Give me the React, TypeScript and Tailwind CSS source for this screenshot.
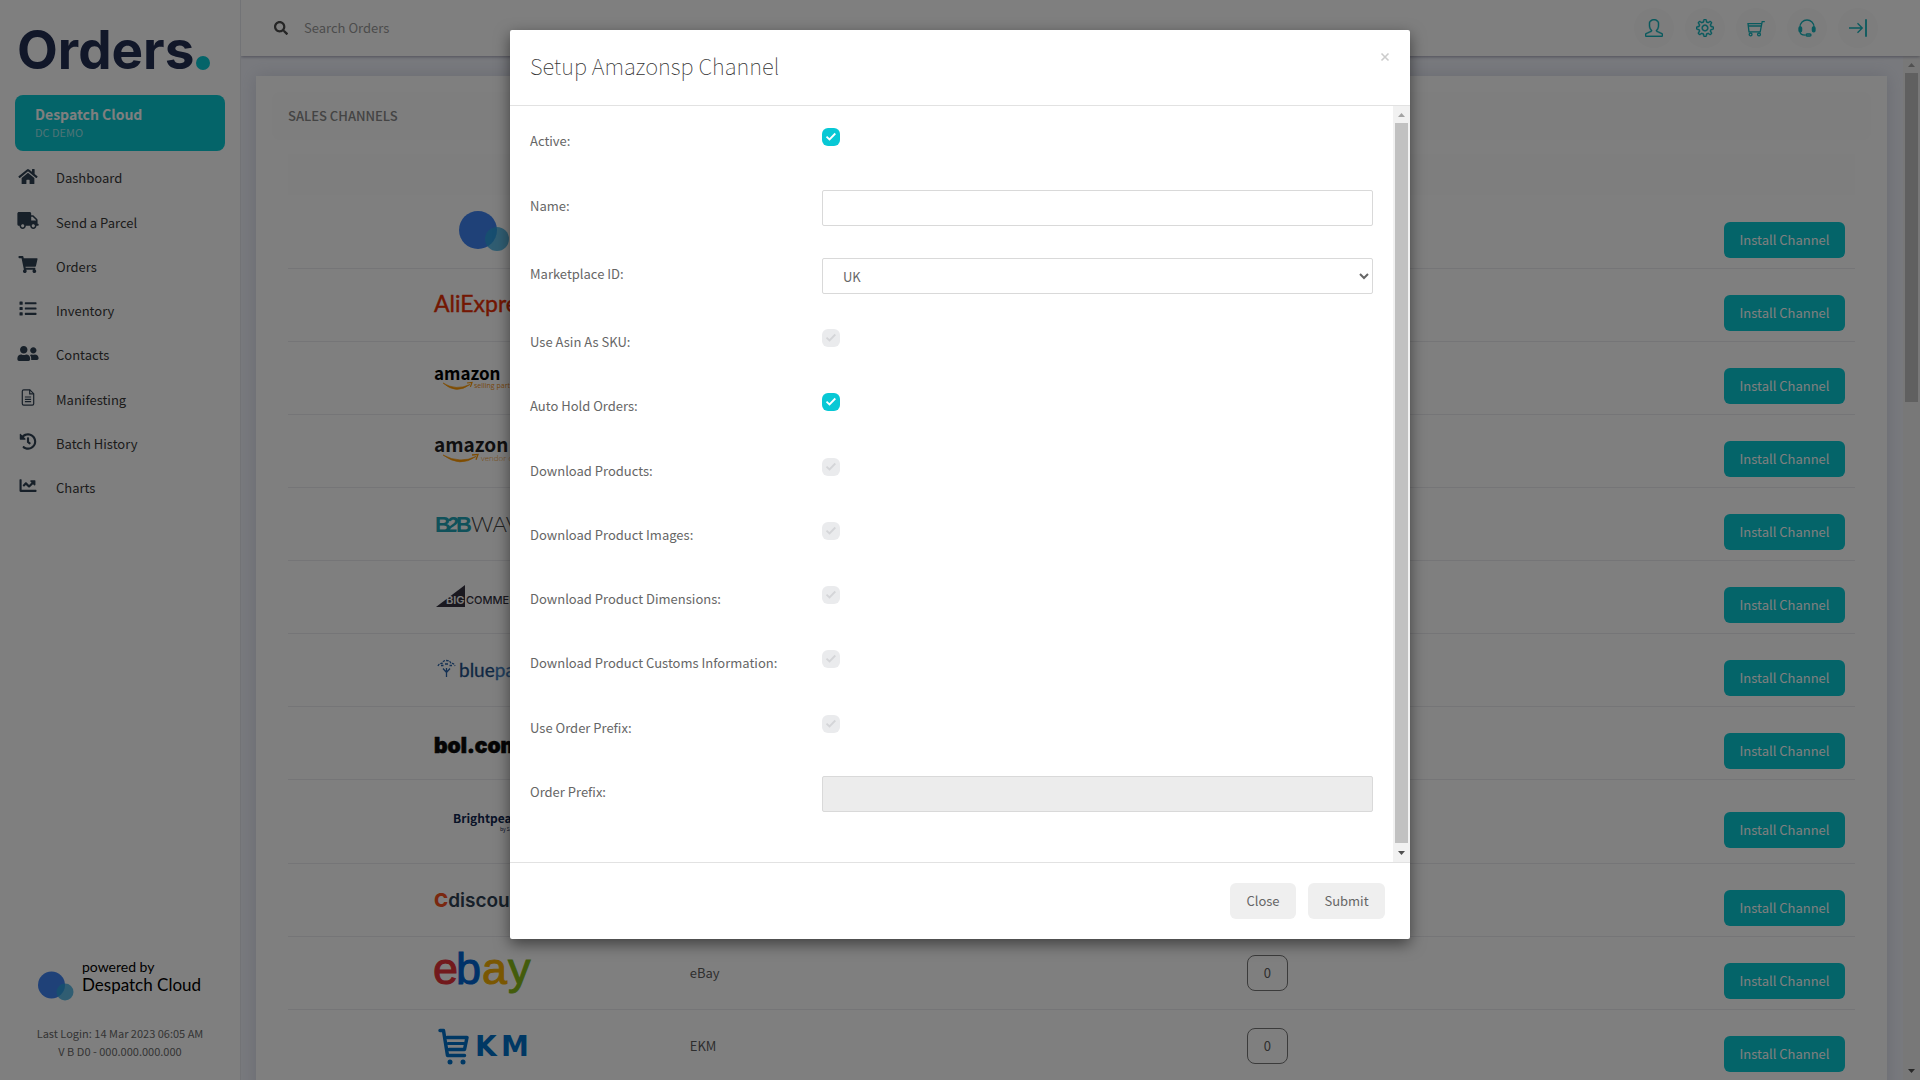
import { useState, type ReactNode } from "react";
import { SlUser, SlSettings } from "react-icons/sl";
import {
  FaChartLine,
  FaHistory,
  FaHome,
  FaList,
  FaSearch,
  FaShoppingCart,
  FaTruck,
  FaUserFriends,
} from "react-icons/fa";

function FileIcon({ className }: { className?: string }) {
  return (
    <svg viewBox="0 0 13 17" className={className} fill="none" stroke="currentColor" strokeWidth="1.2">
      <path d="M8.300.8H2.200A1.400 1.400 0 0 0 .8 2.200v12.600a1.400 1.400 0 0 0 1.400 1.400h8.600a1.400 1.400 0 0 0 1.400-1.400V4.700z" />
      <path d="M8.200.8v4h4M3.400 8h6.200M3.400 10.300h6.200M3.400 12.600h6.200" />
    </svg>
  );
}

const navItems = [
  { label: "Dashboard", Icon: FaHome },
  { label: "Send a Parcel", Icon: FaTruck },
  { label: "Orders", Icon: FaShoppingCart },
  { label: "Inventory", Icon: FaList },
  { label: "Contacts", Icon: FaUserFriends },
  { label: "Manifesting", Icon: FileIcon },
  { label: "Batch History", Icon: FaHistory },
  { label: "Charts", Icon: FaChartLine },
];

function CartIcon() {
  return (
    <svg viewBox="0 0 18 18" className="size-[18px]" fill="none" stroke="currentColor" strokeWidth="1.3">
      <path d="M17.8 2.6h-2.6l-2 10.2H2L1 4.6h13.6M1.2 7h12.8" />
      <circle cx="3.6" cy="15.4" r="1.4" />
      <circle cx="12" cy="15.4" r="1.4" />
    </svg>
  );
}

function HeadsetIcon() {
  return (
    <svg viewBox="0 0 18 18" className="size-[18px]" fill="none" stroke="currentColor" strokeWidth="1.3">
      <path d="M2 8a7 7 0 0 1 14 0" />
      <path d="M2 12.5c0 2.4 2.2 3.6 5.4 3.6" />
      <rect x="1" y="7.8" width="2.6" height="5" rx="1.2" fill="currentColor" />
      <rect x="14.4" y="7.8" width="2.6" height="5" rx="1.2" fill="currentColor" />
      <rect x="8" y="15" width="5" height="2" rx="1" />
    </svg>
  );
}

function LogoutIcon() {
  return (
    <svg viewBox="0 0 18 18" className="size-[18px]" fill="none" stroke="currentColor" strokeWidth="1.3">
      <path d="M0 9h13M8.5 4.2L13.3 9l-4.8 4.8" />
      <path d="M17 .2v17.6" strokeWidth="1.8" />
    </svg>
  );
}

const tools: { label: string; icon: ReactNode }[] = [
  { label: "Profile", icon: <SlUser strokeWidth={20} className="size-[18px]" /> },
  { label: "Settings", icon: <SlSettings strokeWidth={20} className="size-[18px]" /> },
  { label: "Basket", icon: <CartIcon /> },
  { label: "Support", icon: <HeadsetIcon /> },
  { label: "Log out", icon: <LogoutIcon /> },
];

function Logo({ label, children }: { label: string; children: ReactNode }) {
  return (
    <svg viewBox="0 0 100 60" className="mx-auto block h-[60px] w-[100px] overflow-visible" role="img" aria-label={label}>
      {children}
    </svg>
  );
}

const sans = "'Noto Sans CJK SC', sans-serif";

type Channel = { id: string; name?: string; installed?: number; tall?: boolean; logo: ReactNode };

const channels: Channel[] = [
  {
    id: "Despatch Cloud",
    logo: (
      <>
        <circle cx="44" cy="29" r="19" fill="#3f82f0" />
        <circle cx="63" cy="38" r="12" fill="#2ba4dc" fillOpacity="0.75" />
      </>
    ),
  },
  {
    id: "AliExpress",
    logo: (
      <text x="0" y="37" fontFamily="Lato, sans-serif" fontSize="23" fill="#e62e04" stroke="#e62e04" strokeWidth="0.4">
        AliExpress
      </text>
    ),
  },
  {
    id: "Amazon Selling Partner",
    logo: (
      <>
        <text x="0" y="32" fontFamily={sans} fontWeight="700" fontSize="17" fill="#000">
          amazon
        </text>
        <path d="M9 35Q22 43 36 36.500Q22 47 9 35Z" fill="#f90" stroke="#f90" strokeWidth="0.6" />
        <path d="M33 35l5-.6-1.600 4.500" fill="none" stroke="#f90" strokeWidth="1.200" />
        <text x="40" y="40" fontFamily="Open Sans, sans-serif" fontSize="7" fill="#f09020">
          selling partner
        </text>
      </>
    ),
  },
  {
    id: "Amazon Vendor Central",
    logo: (
      <>
        <text x="0" y="31" fontFamily={sans} fontWeight="700" fontSize="19" fill="#221f1f">
          amazon
        </text>
        <path d="M9 34Q26 43 42 35.500Q26 47 9 34Z" fill="#f90" stroke="#f90" strokeWidth="0.6" />
        <path d="M38 34l6-.6-2 5.400" fill="none" stroke="#f90" strokeWidth="1.300" />
        <text x="47" y="40" fontFamily="Open Sans, sans-serif" fontWeight="300" fontSize="8" fill="#f0951c">
          vendor central
        </text>
      </>
    ),
  },
  {
    id: "B2B Wave",
    logo: (
      <>
        <text x="1" y="38" fontFamily="Liberation Sans, sans-serif" fontWeight="700" fontSize="22" fill="#21a3b4">
          B<tspan x="12" fontStyle="italic">2</tspan>
          <tspan x="22">B</tspan>
        </text>
        <text x="37" y="38" fontFamily="Lato, sans-serif" fontWeight="300" fontSize="22" fill="#444">
          WAVE
        </text>
      </>
    ),
  },
  {
    id: "BigCommerce",
    logo: (
      <>
        <path d="M2 40h29V18z" fill="#34313f" />
        <text x="12" y="37" fontFamily="Inter, sans-serif" fontWeight="600" fontSize="11" fill="#fff">
          BIG
        </text>
        <text x="32" y="37" fontFamily="Inter, sans-serif" fontWeight="500" fontSize="11" fill="#34313f">
          COMMERCE
        </text>
      </>
    ),
  },
  {
    id: "Bluepark",
    logo: (
      <>
        <g fill="none" stroke="#2b63a8" strokeWidth="1.300">
          <path d="M4 26q1-3 4-2.500Q9 20.500 12.500 20.500T17 23.500q3-.5 4 2.500" strokeDasharray="2.500 1" />
          <path d="M12.500 28v9M9 28.500l3.500 4 3.500-4M7 25.500h2.500M15.500 25.500h2.500M11 24h3" />
        </g>
        <text x="25" y="37" fontFamily="Lato, sans-serif" fontSize="19" fill="#1f4f86" stroke="#1f4f86" strokeWidth="0.300">
          blue<tspan fill="#3f7cba" stroke="#3f7cba">park</tspan>
        </text>
      </>
    ),
  },
  {
    id: "Bol.com",
    logo: (
      <text x="0" y="40" fontFamily="Inter, sans-serif" fontWeight="900" fontSize="21" fill="#0a0a0a" stroke="#0a0a0a" strokeWidth="0.600">
        bol.com
      </text>
    ),
  },
  {
    id: "Brightpearl",
    tall: true,
    logo: (
      <>
        <text x="19" y="32" fontFamily={sans} fontWeight="700" fontSize="12" fill="#10264f">
          Brightpearl
        </text>
        <text x="66" y="40" fontFamily={sans} fontSize="5" fill="#10264f">
          by Sage
        </text>
      </>
    ),
  },
  {
    id: "Cdiscount",
    logo: (
      <text x="0" y="37" fontFamily="Inter, sans-serif" fontWeight="600" fontSize="19" fill="#2f4152">
        <tspan fill="#f4511e" fontWeight="800">
          C
        </tspan>
        discount
      </text>
    ),
  },
  {
    id: "eBay",
    name: "eBay",
    installed: 0,
    logo: (
      <g fontFamily="Liberation Sans, sans-serif" fontSize="45" strokeWidth="1">
        <text x="-1" y="41" fill="#e53238" stroke="#e53238">
          e
        </text>
        <text x="22" y="41" fill="#0064d2" stroke="#0064d2">
          b
        </text>
        <text x="48" y="41" fill="#f5af02" stroke="#f5af02">
          a
        </text>
        <text x="74" y="41" fill="#86b817" stroke="#86b817">
          y
        </text>
      </g>
    ),
  },
  {
    id: "EKM",
    name: "EKM",
    installed: 0,
    logo: (
      <>
        <g fill="none" stroke="#0070c9" strokeLinecap="round" strokeLinejoin="round">
          <path d="M6 14.500h3.500l4 25h17" strokeWidth="3.500" />
          <path d="M13 21.500h20l-2.500 12H15" strokeWidth="3.500" />
          <path d="M14 27.500h16" strokeWidth="3" />
        </g>
        <circle cx="16" cy="46" r="2.500" fill="#0070c9" />
        <circle cx="29" cy="46" r="2.500" fill="#0070c9" />
        <text x="41" y="40" fontFamily="DejaVu Sans, sans-serif" fontWeight="700" fontSize="28" fill="#0070c9">
          K<tspan x="67">M</tspan>
        </text>
      </>
    ),
  },
];

function Sidebar() {
  return (
    <aside className="relative z-20 flex w-[241px] shrink-0 flex-col border-r border-[#e4e6ec] bg-white px-[15px]">
      <div className="mt-[19px] flex h-[63px] items-center pl-[2px]">
        <span className="font-[Inter] text-[53px] leading-[63px] font-bold text-[#232f53]">Orders</span>
        <span className="mt-[24px] ml-[2px] size-[14px] rounded-full bg-[#08c8d2]" />
      </div>
      <div className="mt-[13px] h-14 rounded-lg bg-[#08c8d2] px-5 pt-[9px] text-white">
        <p className="text-[14px] leading-5 font-bold">Despatch Cloud</p>
        <p className="text-[11px] leading-4 text-white/60">DC DEMO</p>
      </div>
      <nav className="mt-[15px] flex h-[334px] flex-col justify-between">
        {navItems.map(({ label, Icon }) => (
          <a key={label} href="#" className="flex h-6 items-center gap-[17px] text-[13px] text-[#383838]">
            <Icon className="mb-1 ml-[2px] h-[17px] w-[22px] text-[#2f4052]" />
            {label}
          </a>
        ))}
      </nav>
      <div className="mt-auto pb-5">
        <div className="flex items-end gap-2 pl-[23px]">
          <svg viewBox="0 0 36 30" className="h-[30px] w-9">
            <circle cx="13.500" cy="14" r="13.500" fill="#3f82f0" />
            <circle cx="27" cy="21" r="8.500" fill="#2ba4dc" fillOpacity="0.75" />
          </svg>
          <div className="mb-[7px] font-[Lato] text-black">
            <p className="text-[14px] leading-[18px]">powered by</p>
            <p className="text-[17px] leading-[18px] whitespace-nowrap">Despatch Cloud</p>
          </div>
        </div>
        <div className="mt-[23px] text-center text-[11px] leading-[18px] text-[#6a6a6a]">
          <p>Last Login: 14 Mar 2023 06:05 AM</p>
          <p>V B D0 - 000.000.000.000</p>
        </div>
      </div>
    </aside>
  );
}

function TopBar() {
  return (
    <header className="relative z-10 flex h-14 shrink-0 items-center bg-white pr-[42px] pl-[33px] shadow-[0_1px_3px_rgba(60,60,90,0.45)]">
      <FaSearch className="size-[14px] text-[#4a4a4a]" />
      <input
        type="text"
        aria-label="Search Orders"
        placeholder="Search Orders"
        className="ml-4 h-9 flex-1 bg-transparent pb-[2px] text-[13px] outline-none placeholder:text-[#999]"
      />
      <div className="flex gap-[11px]">
        {tools.map((t) => (
          <button key={t.label} aria-label={t.label} className="flex size-10 items-center justify-center rounded-full bg-[#fafafa] text-[#14b4bc]">
            {t.icon}
          </button>
        ))}
      </div>
    </header>
  );
}

function Channels() {
  return (
    <section className="min-w-0 flex-1 self-start bg-white p-4 shadow-[0_0_16px_rgba(90,100,130,0.2)]">
      <h2 className="rounded-lg bg-[#fcfcfc] px-4 text-[13px] leading-12 font-medium text-[#888]">SALES CHANNELS</h2>
      <table className="mx-4 mt-[14px] w-[calc(100%-32px)] table-fixed border-collapse text-[13px] text-[#5c5c5c]">
        <thead>
          <tr className="h-[41px] bg-[#fcfcfc]">
            <th aria-label="Logo" />
            <th aria-label="Name" />
            <th aria-label="Installed" />
            <th aria-label="Action" />
          </tr>
        </thead>
        <tbody>
          {channels.map((c) => (
            <tr key={c.id} className={c.tall ? "h-[84px] border-b border-[#ebebef]" : "h-[73px] border-b border-[#ebebef]"}>
              <td className="p-0">
                <Logo label={c.id}>{c.logo}</Logo>
              </td>
              <td className="px-[10px] py-0">{c.name}</td>
              <td className="p-0">
                {c.installed !== undefined && (
                  <span className="mx-auto flex h-9 w-[41px] items-center justify-center rounded-lg border border-[#777]">{c.installed}</span>
                )}
              </td>
              <td className="px-[10px] py-0">
                <button className="mt-[17px] ml-auto block h-9 w-[121px] rounded-md bg-[#08c8d2] text-white">Install Channel</button>
              </td>
            </tr>
          ))}
        </tbody>
      </table>
    </section>
  );
}

function ScrollTrack({ thumb }: { thumb: string }) {
  return (
    <div aria-hidden="true" className="flex w-[17px] shrink-0 flex-col items-center bg-[#f1f1f1]">
      <svg viewBox="0 0 17 17" className="size-[17px] shrink-0">
        <path d="M5 11h7L8.500 7z" fill="#a3a3a3" />
      </svg>
      <div className="w-full flex-1 px-[2px] pb-[2px]">
        <div className={thumb} />
      </div>
      <svg viewBox="0 0 17 17" className="size-[17px] shrink-0">
        <path d="M5 6h7l-3.500 4z" fill="#505050" />
      </svg>
    </div>
  );
}

function Row({ id, label, children }: { id: string; label: string; children: ReactNode }) {
  return (
    <div className="grid grid-cols-[292px_1fr] items-start">
      <label htmlFor={id} className="pt-[6px] leading-5">
        {label}
      </label>
      {children}
    </div>
  );
}

function Tick({ id, initial = false }: { id: string; initial?: boolean }) {
  const [on, setOn] = useState(initial);
  return (
    <span className="relative mt-[3px] block size-[18px]">
      <input
        id={id}
        type="checkbox"
        checked={on}
        onChange={(e) => setOn(e.target.checked)}
        className="block size-[18px] appearance-none rounded-[6px] bg-[#eaebed] checked:bg-[#08c8d5]"
      />
      <svg viewBox="0 0 18 18" className={on ? "pointer-events-none absolute inset-0 text-white" : "pointer-events-none absolute inset-0 text-[#d4d5d8]"}>
        <path d="M4.500 8.700l3 2.800L13.300 5.500" fill="none" stroke="currentColor" strokeWidth="1.800" />
      </svg>
    </span>
  );
}

const field = "h-9 w-full rounded-[2px] border border-[#d9d9d9]";

function SetupDialog() {
  return (
    <div className="absolute inset-0 z-30 flex items-start justify-center bg-black/50 pt-[30px]">
      <div role="dialog" aria-modal="true" aria-labelledby="setup-title" className="w-[900px] rounded-[2px] bg-white shadow-[0_5px_15px_rgba(0,0,0,0.5)]">
        <div className="flex h-[76px] items-start justify-between border-b border-[#e2e2e2] pr-[20px] pl-5">
          <h1 id="setup-title" className="pt-[19px] text-[22px] leading-8 font-thin text-[#333]">
            Setup Amazonsp Channel
          </h1>
          <button aria-label="Close dialog" className="mt-[22px] flex size-[10px] items-center justify-center text-[#ccc]">
            <svg viewBox="0 0 10 10" className="size-[10px]" stroke="currentColor" strokeWidth="1.600">
              <path d="M1.500 1.500l7 7M8.500 1.500l-7 7" />
            </svg>
          </button>
        </div>
        <div className="flex h-[calc(100vh-324px)]">
          <form className="flex-1 overflow-hidden pt-[19px] pr-5 pl-5 text-[13px] text-[#666]">
            <div className="h-[65px]">
              <Row id="active" label="Active:">
                <Tick id="active" initial />
              </Row>
            </div>
            <div className="h-[68px]">
              <Row id="name" label="Name:">
                <input id="name" type="text" className={field} />
              </Row>
            </div>
            <div className="h-[68px]">
              <Row id="marketplace" label="Marketplace ID:">
                <select id="marketplace" className={`${field} bg-white pl-4`}>
                  <option>UK</option>
                </select>
              </Row>
            </div>
            <div className="grid h-[450px] auto-rows-fr">
              <Row id="asin" label="Use Asin As SKU:">
                <Tick id="asin" />
              </Row>
              <Row id="hold" label="Auto Hold Orders:">
                <Tick id="hold" initial />
              </Row>
              <Row id="products" label="Download Products:">
                <Tick id="products" />
              </Row>
              <Row id="images" label="Download Product Images:">
                <Tick id="images" />
              </Row>
              <Row id="dimensions" label="Download Product Dimensions:">
                <Tick id="dimensions" />
              </Row>
              <Row id="customs" label="Download Product Customs Information:">
                <Tick id="customs" />
              </Row>
              <Row id="use-prefix" label="Use Order Prefix:">
                <Tick id="use-prefix" />
              </Row>
            </div>
            <Row id="prefix" label="Order Prefix:">
              <input id="prefix" type="text" disabled className={`${field} bg-[#ececec]`} />
            </Row>
          </form>
          <ScrollTrack thumb="h-full bg-[#c1c1c1]" />
        </div>
        <div className="flex h-[77px] items-center justify-end gap-3 border-t border-[#e2e2e2] pr-[25px] text-[13px] text-[#666]">
          <button className="h-9 w-[66px] rounded-md bg-[#efefef]">Close</button>
          <button className="h-9 w-[77px] rounded-md bg-[#efefef]">Submit</button>
        </div>
      </div>
    </div>
  );
}

export default function App() {
  return (
    <div className="relative flex h-screen overflow-hidden bg-[#f1f3fb] font-['Noto_Sans_CJK_SC',sans-serif]">
      <Sidebar />
      <div className="flex min-w-0 flex-1 flex-col">
        <TopBar />
        <div className="flex min-h-0 flex-1">
          <main className="flex min-w-0 flex-1 overflow-hidden pt-5 pr-4 pl-[15px]">
            <Channels />
          </main>
          <ScrollTrack thumb="h-1/3 bg-[#c1c1c1]" />
        </div>
      </div>
      <SetupDialog />
    </div>
  );
}
